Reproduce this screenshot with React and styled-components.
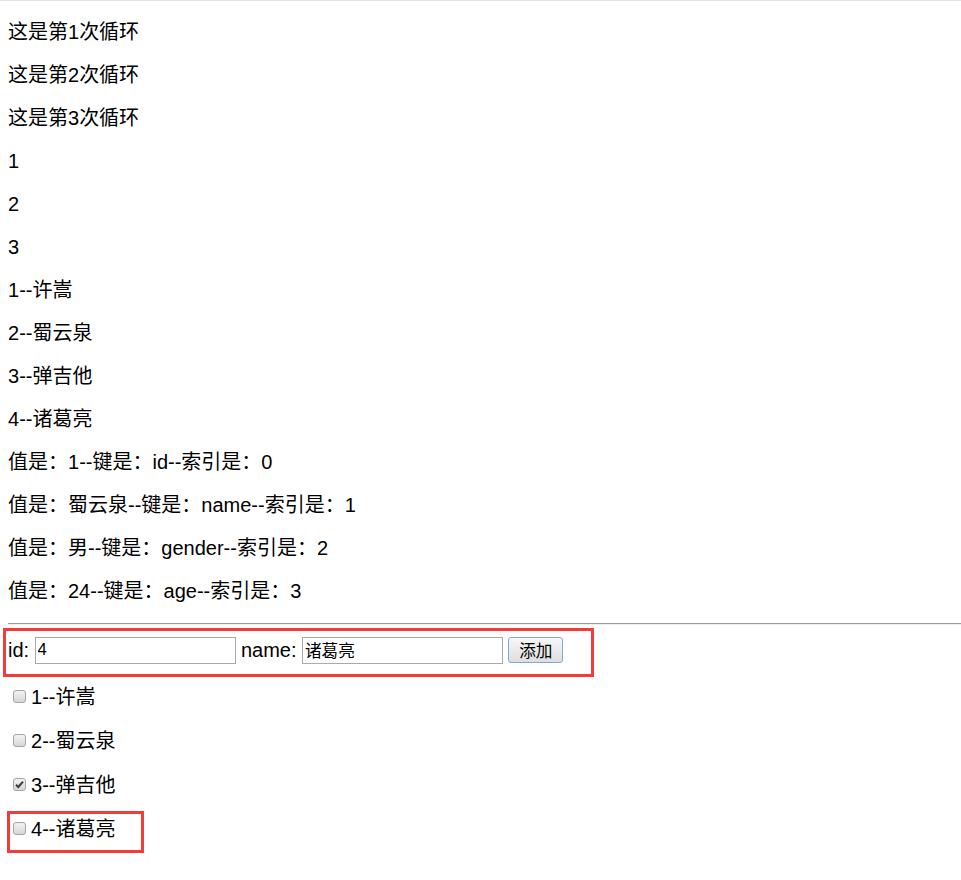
import React, { useState } from 'react';
import styled, { createGlobalStyle } from 'styled-components';

const GlobalStyle = createGlobalStyle`
  html {
    background: linear-gradient(#e4e4e4, #e4e4e4) top left / 100% 1px no-repeat, #fff;
  }
  body {
    margin: 0;
    font-family: "Liberation Sans", Arial, "Noto Sans CJK SC", sans-serif;
    font-size: 20px;
    color: #000;
  }
`;

const Page = styled.div`
  padding: 1px 0 20px 8px;
`;

const Para = styled.p`
  margin: 20px 0;
  line-height: 23px;
`;

const Rule = styled.hr`
  margin: 10px 0;
  height: 0;
  border: 0;
  border-top: 1px solid #9a9a9a;
  border-bottom: 1px solid #eeeeee;
`;

const FormRow = styled.div`
  display: flex;
  height: 30px;
`;

const Highlight = styled.div`
  position: relative;
  display: flex;
  align-items: center;
  gap: ${(p) => p.$gap || 0}px;
  &::after {
    content: '';
    position: absolute;
    top: -7px;
    bottom: -12px;
    left: ${(p) => p.$left}px;
    right: ${(p) => p.$right}px;
    border: 3px solid #f53a3a;
    pointer-events: none;
  }
`;

const Plain = styled.div`
  display: flex;
  align-items: center;
`;

const Label = styled.span`
  line-height: 23px;
`;

const TextInput = styled.input`
  box-sizing: border-box;
  width: 201px;
  height: 27px;
  margin: 0;
  padding: 1px 2px;
  border: 1px solid #a9a9a9;
  font: 16.67px "Liberation Sans", Arial, "Noto Sans CJK SC", sans-serif;
  color: #000;
  outline: none;
  background: #fff;
`;

const AddButton = styled.button`
  box-sizing: border-box;
  width: 55px;
  height: 26px;
  margin: 0;
  padding: 0;
  border: 1px solid #7fa8dc;
  border-radius: 3px;
  background: linear-gradient(#f7f7f7, #dedede);
  font: 16.67px "Liberation Sans", Arial, "Noto Sans CJK SC", sans-serif;
  color: #000;
  cursor: pointer;
`;

const Item = styled.p`
  display: flex;
  align-items: center;
  height: 24px;
  margin: 20px 0;
  line-height: 23px;
`;

const Box = styled.span`
  box-sizing: border-box;
  width: 13px;
  height: 13px;
  margin: -1px 5px 0 5px;
  border: 1px solid #a6a6a6;
  border-radius: 3px;
  background: linear-gradient(#f3f3f3, #d6d6d6);
  display: flex;
  align-items: center;
  justify-content: center;
  cursor: pointer;
  flex: none;
`;

function Checkbox({ checked, onToggle }) {
  return (
    <Box role="checkbox" aria-checked={checked} onClick={onToggle}>
      {checked && (
        <svg width="11" height="11" viewBox="0 0 11 11">
          <path d="M2 5.8 L4.3 8 L9 2.6" fill="none" stroke="#3a3a3a" strokeWidth="2" />
        </svg>
      )}
    </Box>
  );
}

const person = { id: 1, name: '蜀云泉', gender: '男', age: 24 };

export default function App() {
  const [id, setId] = useState('4');
  const [name, setName] = useState('诸葛亮');
  const [list, setList] = useState([
    { id: 1, name: '许嵩', checked: false },
    { id: 2, name: '蜀云泉', checked: false },
    { id: 3, name: '弹吉他', checked: true },
    { id: 4, name: '诸葛亮', checked: false },
  ]);

  const toggle = (i) =>
    setList((l) => l.map((u, j) => (j === i ? { ...u, checked: !u.checked } : u)));

  return (
    <>
      <GlobalStyle />
      <Page>
        {[1, 2, 3].map((n) => (
          <Para key={'c' + n}>这是第{n}次循环</Para>
        ))}
        {[1, 2, 3].map((n) => (
          <Para key={'n' + n}>{n}</Para>
        ))}
        {['许嵩', '蜀云泉', '弹吉他', '诸葛亮'].map((u, i) => (
          <Para key={'u' + i}>
            {i + 1}--{u}
          </Para>
        ))}
        {Object.keys(person).map((k, i) => (
          <Para key={k}>
            值是：{person[k]}--键是：{k}--索引是：{i}
          </Para>
        ))}
        <Rule />
        <FormRow>
          <Highlight $left={-5} $right={-31} $gap={5.4}>
            <Label>id:</Label>
            <TextInput value={id} onChange={(e) => setId(e.target.value)} />
            <Label>name:</Label>
            <TextInput value={name} onChange={(e) => setName(e.target.value)} />
            <AddButton type="button">添加</AddButton>
          </Highlight>
        </FormRow>
        {list.map((u, i) => {
          const Wrap = i === 3 ? Highlight : Plain;
          return (
            <Item key={u.id}>
              <Wrap $left={-1} $right={-29}>
                <Checkbox checked={u.checked} onToggle={() => toggle(i)} />
                <span>
                  {u.id}--{u.name}
                </span>
              </Wrap>
            </Item>
          );
        })}
      </Page>
    </>
  );
}
